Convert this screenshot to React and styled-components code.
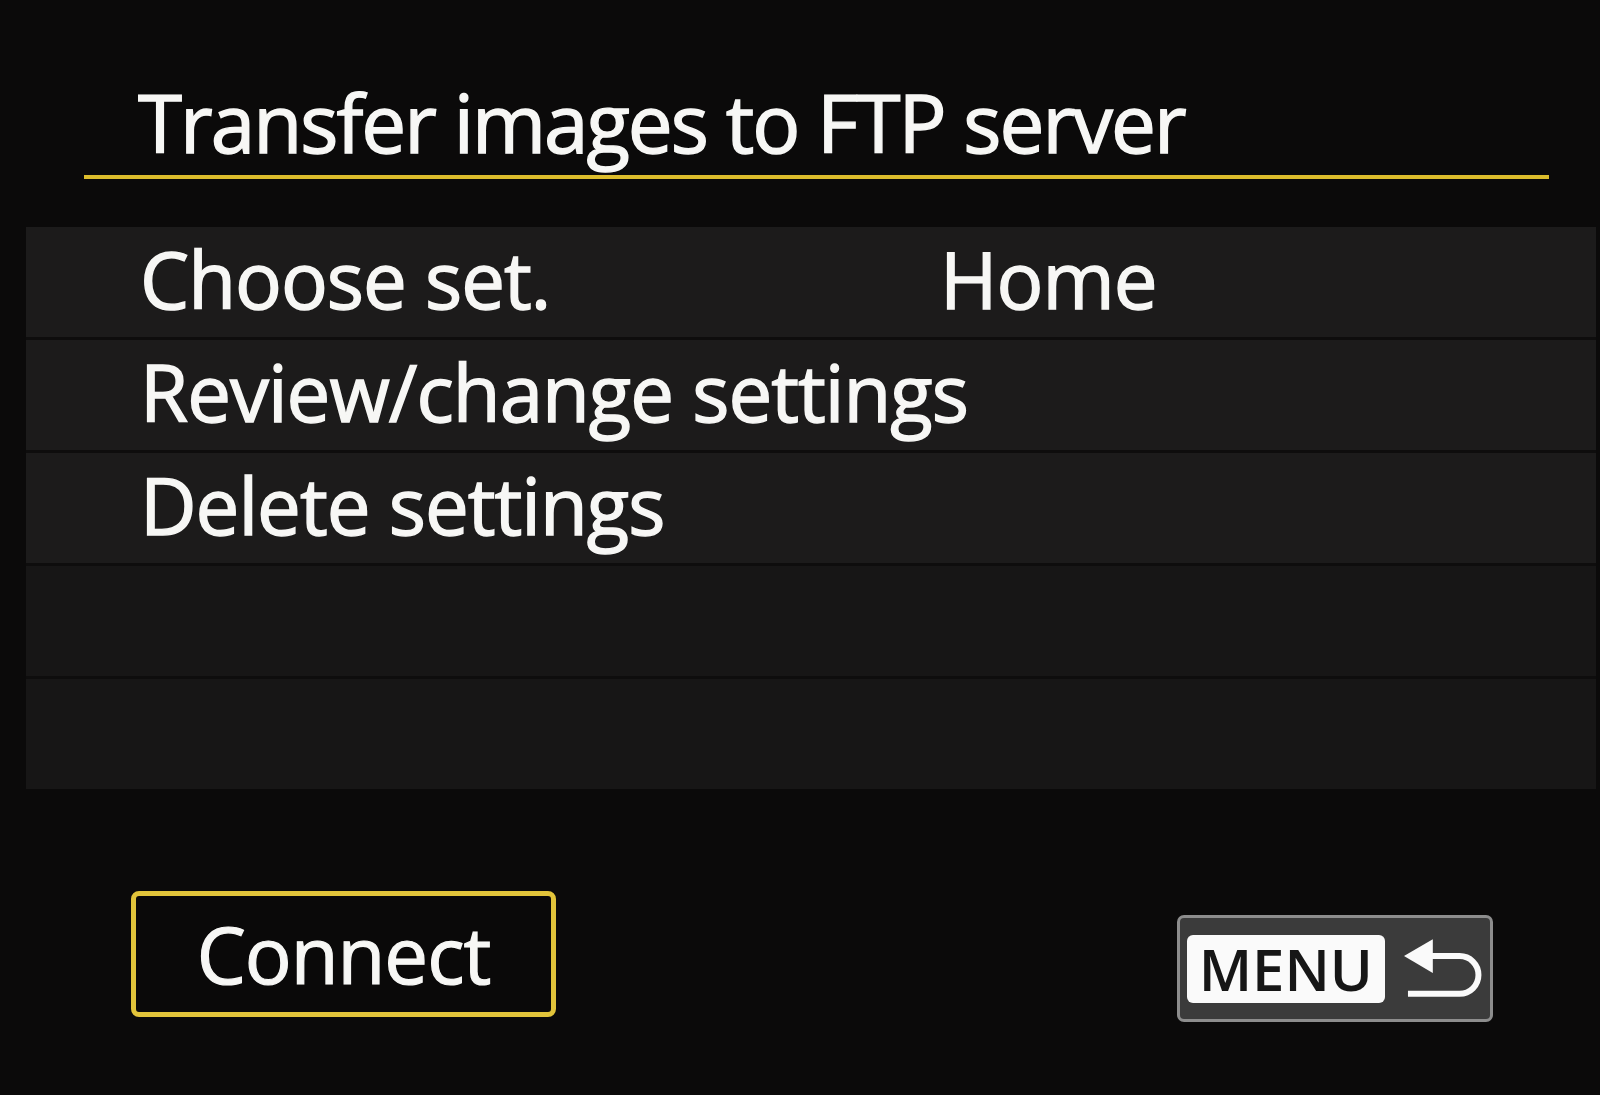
import React from 'react';
import styled, { createGlobalStyle } from 'styled-components';

const GlobalStyle = createGlobalStyle`
  html, body {
    margin: 0;
    padding: 0;
    background: #0b0a0a;
  }
  body {
    font-family: "Open Sans", "Noto Sans", sans-serif;
    color: #f7f7f5;
  }
`;

let Screen = styled.div`
  width: 1600px;
  height: 1095px;
  overflow: hidden;
  background: #0b0a0a;
  display: flex;
  flex-direction: column;
`;

let Header = styled.div`
  margin: 0 51px 0 84px;
  padding: 82px 0 13px 54px;
  border-bottom: 4px solid #dcbd2c;
`;

let Title = styled.h1`
  margin: 0;
  font-size: 80px;
  font-weight: 400;
  line-height: 80px;
  letter-spacing: -2px;
  white-space: nowrap;
  -webkit-text-stroke: 1.4px #f7f7f5;
`;

let Panel = styled.div`
  margin: 48px 4px 0 26px;
  display: flex;
  flex-direction: column;
  gap: 3px;
  background: #0e0d0d;
`;

let Row = styled.div`
  height: 110px;
  box-sizing: border-box;
  padding: 0 0 6px 114px;
  display: grid;
  grid-template-columns: 800px auto;
  align-items: center;
  background: ${p => (p.dim ? '#171616' : '#1c1b1b')};
  font-size: 78px;
  line-height: 104px;
  letter-spacing: -1px;
  white-space: nowrap;
  -webkit-text-stroke: 1.4px #f7f7f5;
`;

let Footer = styled.div`
  margin-top: 102px;
  padding: 0 107px 0 131px;
  display: flex;
  justify-content: space-between;
  align-items: flex-start;
`;

let ConnectButton = styled.div`
  width: 425px;
  height: 126px;
  box-sizing: border-box;
  border: 5px solid #e2c43a;
  border-radius: 8px;
  background: #0a0909;
  display: flex;
  justify-content: center;
  font-size: 78px;
  line-height: 116px;
  letter-spacing: -1px;
  -webkit-text-stroke: 1.2px #f7f7f5;
`;

let MenuButton = styled.div`
  margin-top: 24px;
  width: 316px;
  height: 107px;
  box-sizing: border-box;
  border: 3px solid #8d8d8d;
  border-radius: 7px;
  background: #3b3b3b;
  display: flex;
  align-items: center;
  gap: 19px;
  padding: 0 7px;
`;

let MenuLabel = styled.div`
  width: 199px;
  height: 68px;
  border-radius: 6px;
  background: #fafafa;
  color: #161616;
  font-weight: 600;
  font-size: 58px;
  line-height: 68px;
  text-align: center;
  letter-spacing: 0;
`;

const ReturnIcon = () => (
  <svg width="80" height="62" viewBox="0 0 80 62">
    <polygon points="0,18 29,1 29,35" fill="#fafafa" />
    <path
      d="M27 18 H56 A19 19 0 0 1 56 56 H4"
      fill="none"
      stroke="#fafafa"
      strokeWidth="6"
    />
  </svg>
);

const rows = [
  { label: 'Choose set.', value: 'Home' },
  { label: 'Review/change settings' },
  { label: 'Delete settings' },
  { label: '', dim: true },
  { label: '', dim: true },
];

const App = () => {
  return (
    <Screen>
      <GlobalStyle />
      <Header>
        <Title>Transfer images to FTP server</Title>
      </Header>
      <Panel>
        {rows.map((r, i) => (
          <Row key={i} dim={r.dim}>
            <span>{r.label}</span>
            <span>{r.value}</span>
          </Row>
        ))}
      </Panel>
      <Footer>
        <ConnectButton>Connect</ConnectButton>
        <MenuButton>
          <MenuLabel>MENU</MenuLabel>
          <ReturnIcon />
        </MenuButton>
      </Footer>
    </Screen>
  );
};

export default App;
